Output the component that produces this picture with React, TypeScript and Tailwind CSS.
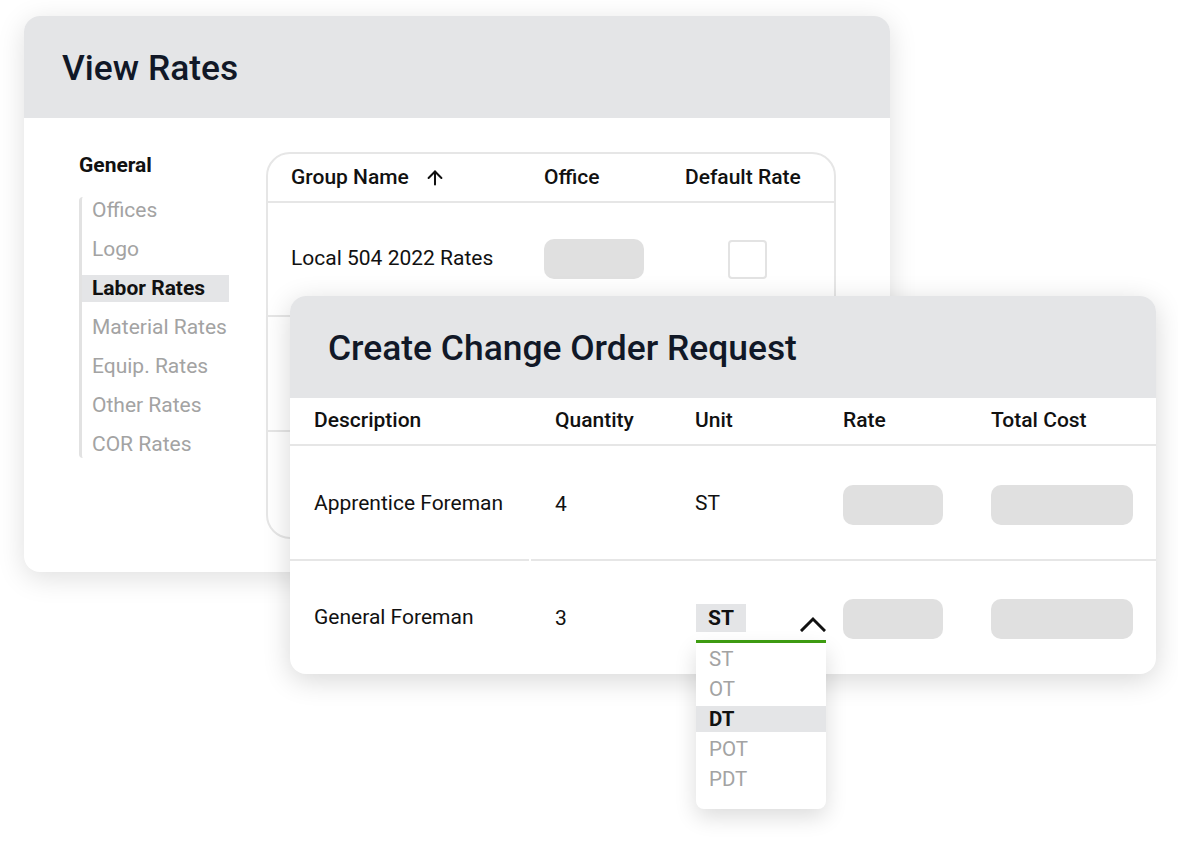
import React from "react";
import { ArrowUp } from "lucide-react";

const font = { fontFamily: "Roboto, 'Noto Sans', Arial, sans-serif" };

function Pill({ w }: { w: string }) {
  return <div className={`${w} h-[40px] rounded-[10px] bg-[#e0e0e0]`} />;
}

export default function App() {
  const sideItems = [
    "Offices",
    "Logo",
    "Labor Rates",
    "Material Rates",
    "Equip. Rates",
    "Other Rates",
    "COR Rates",
  ];
  const options = ["ST", "OT", "DT", "POT", "PDT"];
  return (
    <div
      className="relative w-[1178px] h-[858px] bg-white overflow-hidden text-[#111111]"
      style={font}
    >
      {/* View Rates card */}
      <div className="absolute left-[24px] top-[16px] w-[866px] h-[556px] rounded-[16px] bg-white shadow-[0_6px_28px_rgba(0,0,0,0.13)]">
        <div className="h-[102px] bg-[#e4e5e7] rounded-t-[16px] px-[38px] pt-[31px]">
          <h1 className="text-[35.4px] leading-[42px] font-medium text-[#111827]">
            View Rates
          </h1>
        </div>
        <div className="flex pt-[34px] pl-[55px]">
          <div className="w-[187px]">
            <div className="text-[21px] leading-[27px] font-bold">General</div>
            <div className="mt-[18px] flex flex-col gap-[12px] border-l-[3px] border-[#e2e2e2] rounded-l-[4px]">
              {sideItems.map((s) => (
                <div
                  key={s}
                  className={
                    s === "Labor Rates"
                      ? "w-[147px] h-[27px] leading-[27px] pl-[10px] text-[21px] font-bold bg-[#e4e5e7] text-[#111111]"
                      : "w-[147px] h-[27px] leading-[27px] pl-[10px] text-[21px] text-[#a3a3a3]"
                  }
                >
                  {s}
                </div>
              ))}
            </div>
          </div>
          <div className="w-[570px] h-[387px] border-2 border-[#e6e6e6] rounded-[24px] flex flex-col">
            <div className="h-[49px] shrink-0 border-b-2 border-[#e6e6e6] flex items-center pl-[23px] text-[21px] font-medium">
              <div className="w-[253px] flex items-center">
                <span>Group Name</span>
                <ArrowUp className="ml-[15px]" size={22} strokeWidth={2.2} />
              </div>
              <div className="w-[141px]">Office</div>
              <div>Default Rate</div>
            </div>
            <div className="h-[114px] shrink-0 border-b-2 border-[#e6e6e6] flex items-center pl-[23px] text-[21px]">
              <div className="w-[253px]">Local 504 2022 Rates</div>
              <div className="w-[141px]">
                <Pill w="w-[100px]" />
              </div>
              <div className="pl-[43px]">
                <div className="w-[39px] h-[39px] rounded-[4px] border-2 border-[#e3e3e3]" />
              </div>
            </div>
            <div className="h-[115px] shrink-0 border-b-2 border-[#e6e6e6]" />
            <div className="flex-1" />
          </div>
        </div>
      </div>

      {/* Create Change Order Request card */}
      <div className="absolute left-[290px] top-[296px] w-[866px] h-[378px] rounded-[16px] bg-white shadow-[0_6px_28px_rgba(0,0,0,0.16)] z-10">
        <div className="h-[102px] bg-[#e4e5e7] rounded-t-[16px] px-[38px] pt-[31px]">
          <h2 className="text-[35.4px] leading-[42px] font-medium text-[#111827]">
            Create Change Order Request
          </h2>
        </div>
        <div className="h-[48px] border-b-2 border-[#e6e6e6] flex items-center pl-[24px] text-[21px] font-medium">
          <div className="w-[241px]">Description</div>
          <div className="w-[140px]">Quantity</div>
          <div className="w-[148px]">Unit</div>
          <div className="w-[148px]">Rate</div>
          <div>Total Cost</div>
        </div>
        <div className="relative h-[115px] flex items-center pl-[24px] text-[21px]">
          <div className="w-[241px]">Apprentice Foreman</div>
          <div className="w-[140px] pt-[2px]">4</div>
          <div className="w-[148px]">ST</div>
          <div className="w-[148px] pt-[2px]">
            <Pill w="w-[100px]" />
          </div>
          <div className="pt-[2px]">
            <Pill w="w-[142px]" />
          </div>
          <div className="absolute left-0 bottom-0 flex w-full">
            <div className="w-[239px] h-[2px] bg-[#e6e6e6]" />
            <div className="ml-[2px] flex-1 h-[2px] bg-[#e6e6e6]" />
          </div>
        </div>
        <div className="h-[113px] flex items-center pl-[24px] text-[21px]">
          <div className="w-[241px]">General Foreman</div>
          <div className="w-[140px] pt-[2px]">3</div>
          <div className="w-[148px]">
            <div className="relative w-[130px] h-[28px] ml-[1px]">
              <div className="w-[50px] h-[28px] bg-[#e4e5e7] font-bold leading-[28px] pl-[12px]">
                ST
              </div>
              <svg
                className="absolute right-0 top-[12px]"
                width="26"
                height="16"
                viewBox="0 0 26 16"
                fill="none"
              >
                <path
                  d="M2 14 L13 3 L24 14"
                  stroke="#111111"
                  strokeWidth="3"
                  strokeLinecap="square"
                />
              </svg>
              <div className="absolute left-0 top-[36px] w-[130px] h-[3px] bg-[#3f9f12]" />
              <div className="absolute left-0 top-[39px] w-[130px] h-[166px] bg-white rounded-b-[8px] shadow-[0_8px_22px_rgba(0,0,0,0.14)] pt-[3px] flex flex-col gap-[4px]">
                {options.map((o) => (
                  <div
                    key={o}
                    className={
                      o === "DT"
                        ? "h-[26px] leading-[26px] pl-[13px] text-[20.5px] font-bold bg-[#e4e5e7] text-[#111111]"
                        : "h-[26px] leading-[26px] pl-[13px] text-[20.5px] text-[#a3a3a3]"
                    }
                  >
                    {o}
                  </div>
                ))}
              </div>
            </div>
          </div>
          <div className="w-[148px] pt-[2px]">
            <Pill w="w-[100px]" />
          </div>
          <div className="pt-[2px]">
            <Pill w="w-[142px]" />
          </div>
        </div>
      </div>
    </div>
  );
}
